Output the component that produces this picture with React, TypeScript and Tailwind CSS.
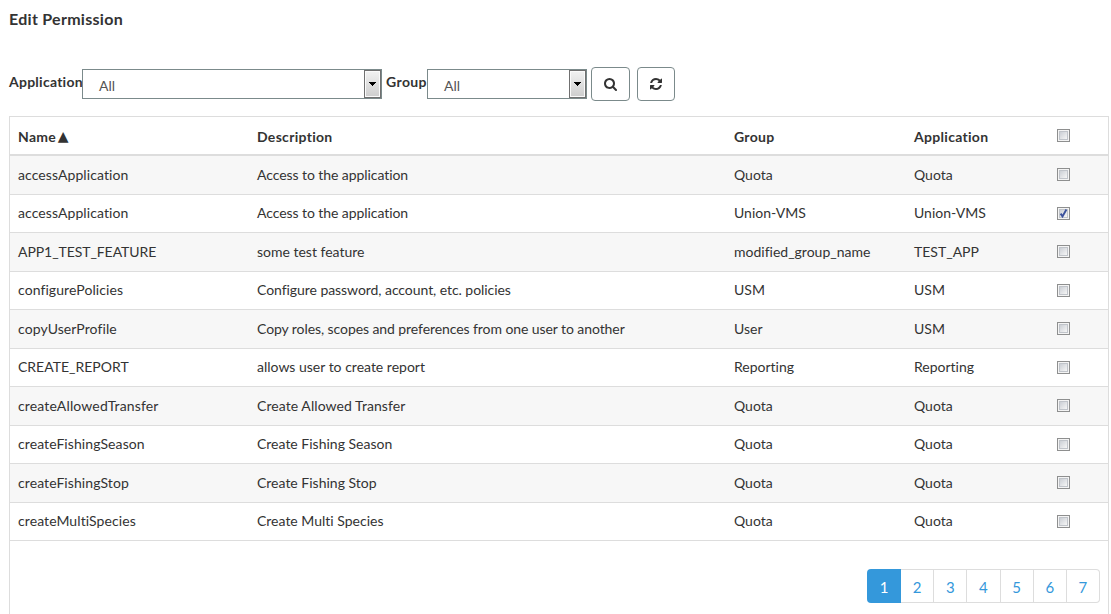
type Permission = {
  name: string;
  description: string;
  group: string;
  application: string;
  selected?: boolean;
  nameClass?: string;
  descriptionClass?: string;
};

const permissions: Permission[] = [
  { name: "accessApplication", description: "Access to the application", group: "Quota", application: "Quota", descriptionClass: "tracking-[-0.07px]" },
  { name: "accessApplication", description: "Access to the application", group: "Union-VMS", application: "Union-VMS", selected: true, descriptionClass: "tracking-[-0.07px]" },
  { name: "APP1_TEST_FEATURE", description: "some test feature", group: "modified_group_name", application: "TEST_APP", nameClass: "tracking-[-0.07px]" },
  { name: "configurePolicies", description: "Configure password, account, etc. policies", group: "USM", application: "USM", descriptionClass: "tracking-[-0.06px]" },
  { name: "copyUserProfile", description: "Copy roles, scopes and preferences from one user to another", group: "User", application: "USM", descriptionClass: "tracking-[-0.08px]" },
  { name: "CREATE_REPORT", description: "allows user to create report", group: "Reporting", application: "Reporting", nameClass: "tracking-normal" },
  { name: "createAllowedTransfer", description: "Create Allowed Transfer", group: "Quota", application: "Quota", nameClass: "tracking-[0.14px]", descriptionClass: "tracking-[0.07px]" },
  { name: "createFishingSeason", description: "Create Fishing Season", group: "Quota", application: "Quota" },
  { name: "createFishingStop", description: "Create Fishing Stop", group: "Quota", application: "Quota" },
  { name: "createMultiSpecies", description: "Create Multi Species", group: "Quota", application: "Quota" },
];

const pages = [2, 3, 4, 5, 6, 7];

function SearchIcon() {
  return (
    <svg viewBox="0 0 1792 1792" className="size-[14px]" fill="currentColor">
      <path d="M1152 832q0-185-131.5-316.5t-316.5-131.5-316.5 131.5-131.5 316.5 131.5 316.5 316.5 131.5 316.5-131.5 131.5-316.5zm512 832q0 52-38 90t-90 38q-54 0-90-38l-343-342q-179 124-399 124-143 0-273.5-55.5t-225-150-150-225-55.5-273.5 55.5-273.5 150-225 225-150 273.5-55.5 273.5 55.5 225 150 150 225 55.5 273.5q0 220-124 399l343 343q37 37 37 90z" />
    </svg>
  );
}

function RefreshIcon() {
  return (
    <svg viewBox="0 0 1792 1792" className="mr-px size-[14px]" fill="currentColor">
      <path d="M1639 1056q0 5-1 7-64 268-268 434.5t-478 166.5q-146 0-282.5-55t-243.5-157l-129 129q-19 19-45 19t-45-19-19-45v-448q0-26 19-45t45-19h448q26 0 45 19t19 45-19 45l-137 137q71 66 161 102t187 36q134 0 250-65t186-179q11-17 53-117 8-23 30-23h192q13 0 22.5 9.5t9.5 22.5zm25-800v448q0 26-19 45t-45 19h-448q-26 0-45-19t-19-45 19-45l138-138q-148-137-349-137-134 0-250 65t-186 179q-11 17-53 117-8 23-30 23h-199q-13 0-22.5-9.5t-9.5-22.5v-7q65-268 270-434.5t480-166.5q146 0 284 55.5t245 156.5l130-129q19-19 45-19t45 19 19 45z" />
    </svg>
  );
}

function Checkbox({ checked = false }: { checked?: boolean }) {
  return (
    <span role="checkbox" aria-checked={checked} className="block size-[13px] border border-[#8e8f8f] bg-[#f4f4f4] p-px">
      <span className="block size-[9px] border border-[#c0c4ca] bg-linear-to-br from-[#cbcfd5] to-[#f6f6f6]">
        {checked && (
          <svg viewBox="0 0 9 9" className="-mt-px -ml-px block size-[9px]" fill="none" stroke="#3b519c" strokeWidth="1.9">
            <path d="M1.6 4.6 3.5 7.4 7.4 0.5" />
          </svg>
        )}
      </span>
    </span>
  );
}

function Select({ value, className }: { value: string; className: string }) {
  return (
    <div className={`flex h-[30px] border border-[#7b8a8b] bg-white ${className}`}>
      <span className="flex-1 pt-[6px] pl-4 text-[#555]">{value}</span>
      <span className="flex w-[17px] items-center border border-[#707070] bg-linear-to-b from-[#f2f2f2] to-[#cdcdcd] pl-[4px] shadow-[inset_0_0_0_1px_#fafafa]">
        <svg viewBox="0 0 7 4" className="h-1 w-[7px]" shapeRendering="crispEdges">
          <path d="M0 0h7L3.5 4z" fill="#000" />
        </svg>
      </span>
    </div>
  );
}

const columns = "grid grid-cols-[239px_477px_180px_143px_1fr] items-center pl-2";

export default function App() {
  return (
    <div className="flex h-[614px] w-[1111px] flex-col overflow-hidden bg-white pl-[9px] font-['Lato',sans-serif] text-[14px] leading-5 text-[#333] [font-variant-ligatures:none]">
      <h1 className="mt-[8px] text-[16px] leading-[21px] font-bold tracking-[0.28px]">Edit Permission</h1>

      <div className="mt-[38px] flex h-[34px]">
        <span className="w-[73px] pt-[5px] font-bold tracking-[0.25px]">Application</span>
        <Select value="All" className="mt-[2px] w-[300px]" />
        <span className="ml-[4px] w-[41px] pt-[5px] font-bold tracking-[0.4px]">Group</span>
        <Select value="All" className="mt-[2px] w-[160px]" />
        <button aria-label="Search" className="ml-[4px] flex h-[34px] w-[39px] items-center justify-center rounded-[4px] border border-[#7b8a8b]">
          <SearchIcon />
        </button>
        <button aria-label="Refresh" className="ml-[7px] flex h-[34px] w-[38px] items-center justify-center rounded-[4px] border border-[#7b8a8b]">
          <RefreshIcon />
        </button>
      </div>

      <div className="mt-[15px] w-[1100px] flex-1 border border-b-0 border-[#ddd]">
        <div className={`${columns} h-[39px] border-b-2 border-[#ddd] font-bold tracking-[0.3px]`}>
          <span className="flex items-center pt-[3px]">
            Name
            <span className="ml-[1.5px] pb-[2px] font-['DejaVu_Sans',sans-serif] text-[14px] leading-[18px] tracking-normal">▲</span>
          </span>
          <span className="pt-[3px]">Description</span>
          <span className="pt-[3px]">Group</span>
          <span className="pt-[3px]">Application</span>
          <Checkbox />
        </div>
        {permissions.map((p, i) => {
          const even = i % 2 === 0;
          const text = even ? "" : "pb-[2px]";
          return (
            <div key={i} className={`${columns} border-b border-[#ddd] ${even ? "h-[39px] bg-[#f7f7f7]" : "h-[38px] bg-white"}`}>
              <span className={`${text} ${p.nameClass ?? "tracking-[0.08px]"}`}>{p.name}</span>
              <span className={`${text} ${p.descriptionClass ?? ""}`}>{p.description}</span>
              <span className={text}>{p.group}</span>
              <span className={text}>{p.application}</span>
              <span className={even ? "pb-[2px]" : ""}>
                <Checkbox checked={p.selected} />
              </span>
            </div>
          );
        })}
        <nav className="mt-[28px] mr-2 flex justify-end text-[15px] text-[#3498db]">
          <span className="flex h-[34px] w-[34px] items-center justify-center rounded-l-[4px] bg-[#3498db] pt-[2px] text-white">1</span>
          {pages.map((n) => (
            <span key={n} className="flex h-[34px] w-[33.17px] items-center justify-center border border-l-0 border-[#ddd] pt-[2px] last:rounded-r-[4px]">
              {n}
            </span>
          ))}
        </nav>
      </div>
    </div>
  );
}
